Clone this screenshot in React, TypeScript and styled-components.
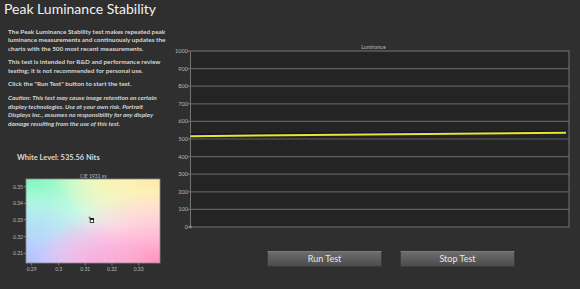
import React from "react";
import styled, { createGlobalStyle } from "styled-components";

const Global = createGlobalStyle`
  html, body { margin: 0; padding: 0; background: #2f2f2f; }
  body { width: 580px; height: 289px; overflow: hidden; }
`;

const Page = styled.div`
  width: 580px;
  height: 289px;
  background: #2f2f2f;
  display: flex;
  font-family: Lato, "Open Sans", sans-serif;
  color: #dcdcdc;
`;

const LeftCol = styled.div`
  width: 170px;
  flex: none;
  display: flex;
  flex-direction: column;
`;

const Title = styled.h1`
  margin: 0;
  padding: 0 0 0 4px;
  height: 20px;
  font-size: 14px;
  line-height: 18px;
  font-weight: 400;
  color: #f2f2f2;
  white-space: nowrap;
`;

const Intro = styled.div`
  padding: 7.5px 0 0 8px;
  display: flex;
  flex-direction: column;
  gap: 5px;
`;

const Para = styled.p<{ $italic?: boolean }>`
  margin: 0;
  font-size: 6.4px;
  line-height: 8.6px;
  font-weight: 700;
  font-style: ${(p) => (p.$italic ? "italic" : "normal")};
  color: #d6d6d6;
  white-space: nowrap;
`;

const WhiteLevel = styled.div`
  margin: 24.5px 0 0 17px;
  font-size: 7.5px;
  font-weight: 700;
  color: #d8d8d8;
  line-height: 10px;
`;

const CieWrap = styled.div`
  margin-top: 6px;
`;

const RightCol = styled.div`
  flex: 1;
  display: flex;
  flex-direction: column;
  padding-top: 40px;
`;

const ButtonRow = styled.div`
  display: flex;
  gap: 18px;
  padding: 11px 0 0 97px;
`;

const Button = styled.button`
  width: 115px;
  height: 16px;
  padding: 0;
  border: 1px solid #3a3a3a;
  border-top-color: #7a7a7a;
  background: linear-gradient(#6c6c6c, #4c4c4c);
  color: #e6e6e6;
  font-family: Lato, "Open Sans", sans-serif;
  font-size: 9px;
  line-height: 14px;
  font-weight: 400;
  cursor: pointer;
`;

const AxisText = styled.text`
  font-family: Lato, "Open Sans", sans-serif;
  font-size: 5.6px;
  fill: #b8b8b8;
`;

function LuminanceChart() {
  const x0 = 20.5;
  const x1 = 399;
  const y0 = 11;
  const y1 = 187;
  const yFor = (v: number) => y1 - (v / 1000) * (y1 - y0);
  const ticks = [0, 100, 200, 300, 400, 500, 600, 700, 800, 900, 1000];
  return (
    <svg width={410} height={200} style={{ display: "block" }}>
      <rect x={x0} y={y0} width={x1 - x0} height={y1 - y0} fill="#242424" />
      {ticks.map((t) => (
        <g key={t}>
          {t !== 0 && t !== 1000 && (
            <line x1={x0} x2={x1} y1={yFor(t)} y2={yFor(t)} stroke="#5e5e5e" strokeWidth={1.2} />
          )}
          <line x1={x0 - 3} x2={x0} y1={yFor(t)} y2={yFor(t)} stroke="#888" strokeWidth={0.8} />
          <AxisText x={x0 - 2.5} y={yFor(t) + 2} textAnchor="end">
            {t}
          </AxisText>
        </g>
      ))}
      <rect x={x0} y={y0} width={x1 - x0} height={y1 - y0} fill="none" stroke="#747474" strokeWidth={1} />
      <circle cx={x0} cy={y1} r={1.4} fill="#888" />
      <AxisText x={203.5} y={8.5} textAnchor="middle" style={{ fontSize: "5.2px" }}>
        Luminance
      </AxisText>
      <line x1={x0} y1={yFor(518) - 1.5} x2={x1 - 3} y2={yFor(536) - 1.5} stroke="#101040" strokeWidth={1.5} />
      <line x1={x0} y1={yFor(516)} x2={x1 - 3} y2={yFor(535.56)} stroke="#e6e62a" strokeWidth={2} />
    </svg>
  );
}

function CieChart() {
  const px0 = 26;
  const px1 = 160;
  const py0 = 10;
  const py1 = 94;
  const xs = [
    { v: "0.29", x: 31.7 },
    { v: "0.3", x: 58.7 },
    { v: "0.31", x: 85.3 },
    { v: "0.32", x: 112 },
    { v: "0.33", x: 138.7 },
  ];
  const ys = [
    { v: "0.35", y: 17.7 },
    { v: "0.34", y: 34.3 },
    { v: "0.33", y: 50.7 },
    { v: "0.32", y: 67.7 },
    { v: "0.31", y: 84.3 },
  ];
  const w = px1 - px0;
  const h = py1 - py0;
  return (
    <svg width={170} height={110} style={{ display: "block" }}>
      <defs>
        <radialGradient id="gTL" cx="0" cy="0" r="0.9">
          <stop offset="0" stopColor="#7ef6bc" stopOpacity="1" />
          <stop offset="1" stopColor="#7ef6bc" stopOpacity="0" />
        </radialGradient>
        <radialGradient id="gTR" cx="1" cy="0" r="0.75">
          <stop offset="0" stopColor="#ffe8a6" stopOpacity="1" />
          <stop offset="1" stopColor="#fff4b0" stopOpacity="0" />
        </radialGradient>
        <radialGradient id="gTM" cx="0.65" cy="0" r="0.45">
          <stop offset="0" stopColor="#f6fbb8" stopOpacity="0.9" />
          <stop offset="1" stopColor="#f6fbb8" stopOpacity="0" />
        </radialGradient>
        <radialGradient id="gBL" cx="0" cy="1" r="0.75">
          <stop offset="0" stopColor="#a9bfff" stopOpacity="1" />
          <stop offset="1" stopColor="#a9bfff" stopOpacity="0" />
        </radialGradient>
        <radialGradient id="gL" cx="0" cy="0.5" r="0.45">
          <stop offset="0" stopColor="#b2f6f4" stopOpacity="0.9" />
          <stop offset="1" stopColor="#b2f6f4" stopOpacity="0" />
        </radialGradient>
        <radialGradient id="gBR" cx="1" cy="1" r="0.85">
          <stop offset="0" stopColor="#ff8fbf" stopOpacity="1" />
          <stop offset="1" stopColor="#ff9fc8" stopOpacity="0" />
        </radialGradient>
        <radialGradient id="gBM" cx="0.5" cy="1" r="0.5">
          <stop offset="0" stopColor="#f7b8f2" stopOpacity="0.9" />
          <stop offset="1" stopColor="#f7b8f2" stopOpacity="0" />
        </radialGradient>
      </defs>
      <AxisText x={(px0 + px1) / 2 + 0.5} y={8.5} textAnchor="middle" style={{ fontSize: "5px" }}>
        CIE 1931 xy
      </AxisText>
      <rect x={px0} y={py0} width={w} height={h} fill="#fdfdfd" />
      {["gTL", "gTM", "gTR", "gL", "gBL", "gBM", "gBR"].map((id) => (
        <rect key={id} x={px0} y={py0} width={w} height={h} fill={`url(#${id})`} />
      ))}
      <rect x={px0} y={py0} width={w} height={h} fill="none" stroke="#8a8a8a" strokeWidth={0.8} />
      {ys.map((t) => (
        <g key={t.v}>
          <line x1={px0 - 2.5} x2={px0} y1={t.y} y2={t.y} stroke="#999" strokeWidth={0.7} />
          <AxisText x={px0 - 3} y={t.y + 1.8} textAnchor="end" style={{ fontSize: "5px" }}>
            {t.v}
          </AxisText>
        </g>
      ))}
      {xs.map((t) => (
        <g key={t.v}>
          <line x1={t.x} x2={t.x} y1={py1} y2={py1 + 2.5} stroke="#999" strokeWidth={0.7} />
          <AxisText x={t.x} y={py1 + 8} textAnchor="middle" style={{ fontSize: "5px" }}>
            {t.v}
          </AxisText>
        </g>
      ))}
      <g>
        <circle cx={89.6} cy={48.6} r={1.1} fill="#777" />
        <rect x={90.2} y={49.5} width={3.4} height={4} fill="#fff" stroke="#111" strokeWidth={0.8} />
        <rect x={90.2} y={49.3} width={3.4} height={1.6} fill="#111" />
      </g>
    </svg>
  );
}

export default function App() {
  return (
    <>
      <Global />
      <Page>
        <LeftCol>
          <Title>Peak Luminance Stability</Title>
          <Intro>
            <Para>
              The Peak Luminance Stability test makes repeated peak
              <br />
              luminance measurements and continuously updates the
              <br />
              charts with the 500 most recent measurements.
            </Para>
            <Para>
              This test is intended for R&amp;D and performance review
              <br />
              testing; it is not recommended for personal use.
            </Para>
            <Para>Click the "Run Test" button to start the test.</Para>
            <Para $italic>
              Caution: This test may cause image retention on certain
              <br />
              display technologies. Use at your own risk. Portrait
              <br />
              Displays Inc., assumes no responsibility for any display
              <br />
              damage resulting from the use of this test.
            </Para>
          </Intro>
          <WhiteLevel>White Level: 535.56 Nits</WhiteLevel>
          <CieWrap>
            <CieChart />
          </CieWrap>
        </LeftCol>
        <RightCol>
          <LuminanceChart />
          <ButtonRow>
            <Button>Run Test</Button>
            <Button>Stop Test</Button>
          </ButtonRow>
        </RightCol>
      </Page>
    </>
  );
}
